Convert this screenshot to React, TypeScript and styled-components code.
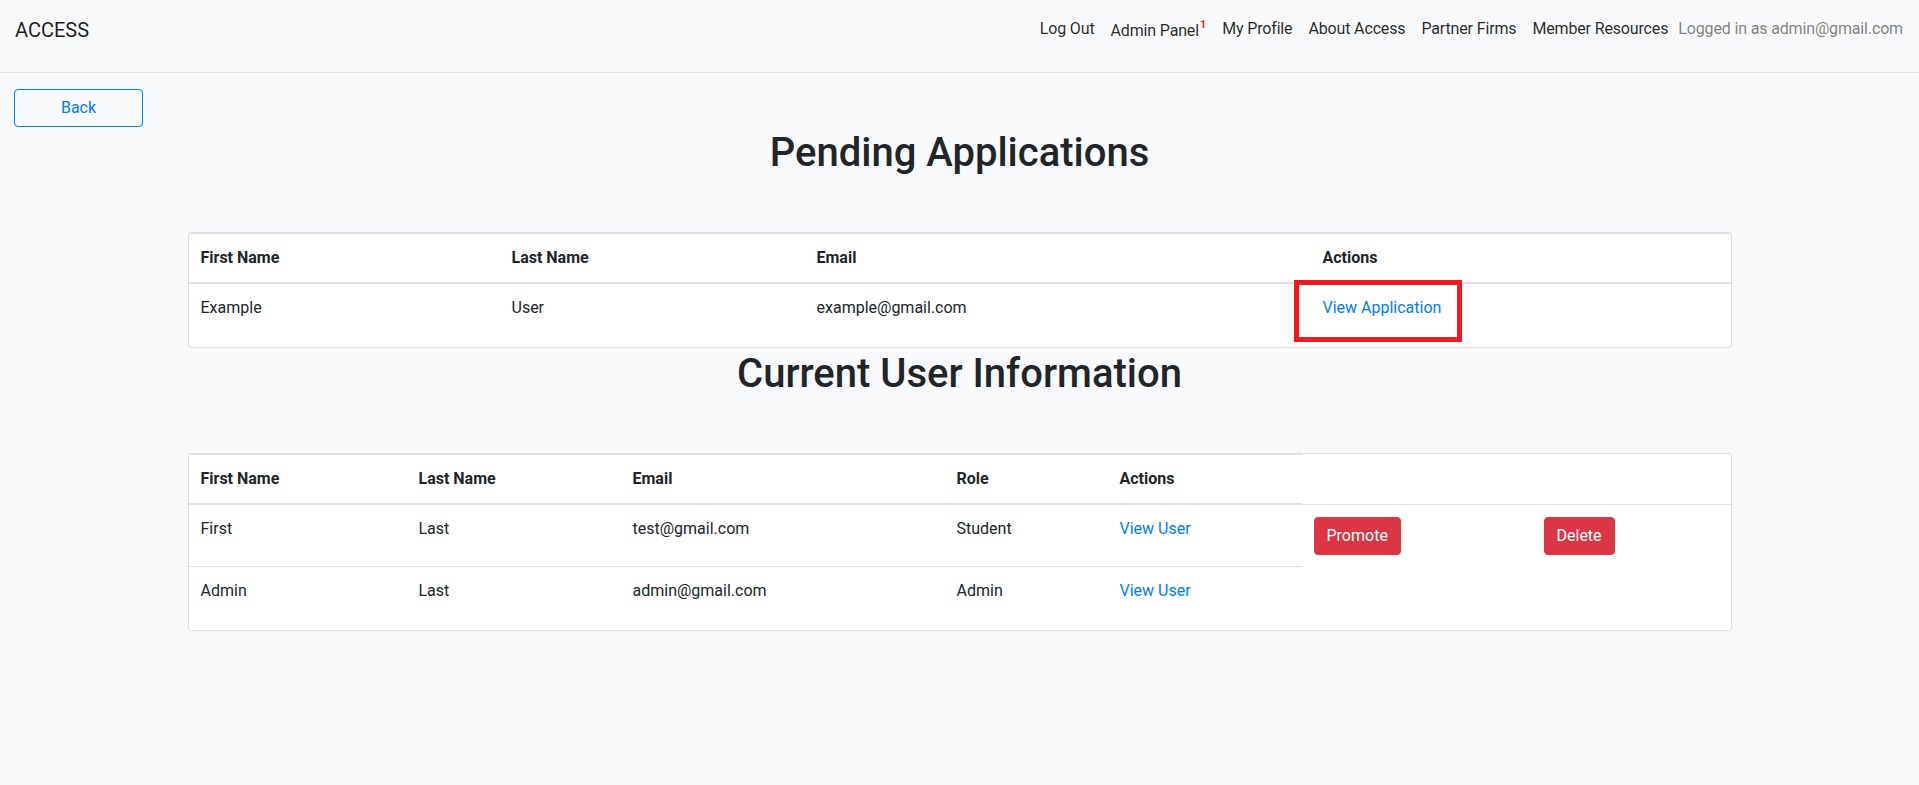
import React from "react";
import styled, { createGlobalStyle } from "styled-components";

const GlobalStyle = createGlobalStyle`
  html, body {
    margin: 0;
    padding: 0;
    background: #f8f9fa;
    color: #212529;
    font-family: Roboto, "Liberation Sans", sans-serif;
    font-size: 16px;
    line-height: 1.5;
  }
  #root { min-height: 785px; }
  * { box-sizing: border-box; }
`;

const Navbar = styled.nav`
  display: flex;
  align-items: center;
  justify-content: space-between;
  height: 73px;
  padding: 0 16px 13px 15px;
  border-bottom: 1px solid #dee2e6;
  background: #f8f9fa;
`;

const Brand = styled.a`
  font-size: 20px;
  line-height: 30px;
  color: rgba(0, 0, 0, 0.9);
  text-decoration: none;
`;

const NavList = styled.div`
  display: flex;
  align-items: center;
  letter-spacing: -0.15px;
`;

const NavLink = styled.a`
  padding: 0 8px;
  line-height: 24px;
  color: rgba(0, 0, 0, 0.85);
  text-decoration: none;
  white-space: nowrap;
`;

const Count = styled.sup`
  font-size: 11px;
  font-weight: 700;
  color: #ff1a1a;
  position: relative;
  top: -2px;
  margin-left: 1px;
`;

const NavText = styled.span`
  margin-left: 2px;
  line-height: 24px;
  color: rgba(0, 0, 0, 0.5);
  white-space: nowrap;
`;

const Main = styled.main`
  display: flex;
  flex-direction: column;
  padding: 16px 0 0;
`;

const Toolbar = styled.div`
  display: flex;
  padding: 0 14px;
`;

const OutlineButton = styled.button`
  width: 129px;
  height: 38px;
  border: 1px solid #007bff;
  border-radius: 4px;
  background: transparent;
  color: #007bff;
  font: inherit;
  cursor: pointer;
`;

const Heading = styled.h1`
  margin: 2px 0 55px;
  font-size: 40px;
  font-weight: 500;
  line-height: 48px;
  text-align: center;
`;

const Card = styled.div`
  width: 1544px;
  margin: 0 auto;
  background: #fff;
  border: 1px solid rgba(0, 0, 0, 0.125);
  border-radius: 4px;
  overflow: hidden;
`;

const Table = styled.table`
  width: 100%;
  margin-bottom: 15px;
  border-collapse: collapse;
  table-layout: fixed;
`;

const Col = styled.col<{ $w?: number }>`
  width: ${(p) => (p.$w ? `${p.$w}px` : "auto")};
`;

const Th = styled.th`
  padding: 12px;
  text-align: left;
  vertical-align: bottom;
  font-weight: 700;
  border-top: 1px solid #dee2e6;
  border-bottom: 2px solid #dee2e6;
`;

const Td = styled.td`
  padding: 12px;
  vertical-align: top;
  border-top: 1px solid #dee2e6;
`;

const Link = styled.a`
  color: #007bff;
  text-decoration: none;
`;

const Highlight = styled.span`
  position: relative;
  display: inline-block;
  &::after {
    content: "";
    position: absolute;
    left: -29px;
    right: -21px;
    top: -16px;
    bottom: -22px;
    border: 5px solid #ed1c24;
    pointer-events: none;
  }
`;

const DangerButton = styled.button`
  height: 38px;
  padding: 6px 12px;
  border: 1px solid #dc3545;
  border-radius: 4px;
  background: #dc3545;
  color: #fff;
  font: inherit;
  line-height: 24px;
  cursor: pointer;
`;

const pending = [{ first: "Example", last: "User", email: "example@gmail.com" }];

const users = [
  { first: "First", last: "Last", email: "test@gmail.com", role: "Student", manage: true },
  { first: "Admin", last: "Last", email: "admin@gmail.com", role: "Admin", manage: false },
];

export default function App() {
  return (
    <>
      <GlobalStyle />
      <Navbar>
        <Brand href="#">ACCESS</Brand>
        <NavList>
          <NavLink href="#">Log Out</NavLink>
          <NavLink href="#">
            Admin Panel<Count>1</Count>
          </NavLink>
          <NavLink href="#">My Profile</NavLink>
          <NavLink href="#">About Access</NavLink>
          <NavLink href="#">Partner Firms</NavLink>
          <NavLink href="#">Member Resources</NavLink>
          <NavText>Logged in as admin@gmail.com</NavText>
        </NavList>
      </Navbar>
      <Main>
        <Toolbar>
          <OutlineButton>Back</OutlineButton>
        </Toolbar>

        <Heading>Pending Applications</Heading>
        <Card>
          <Table>
            <colgroup>
              <Col $w={311} />
              <Col $w={305} />
              <Col $w={506} />
              <Col />
            </colgroup>
            <thead>
              <tr>
                <Th>First Name</Th>
                <Th>Last Name</Th>
                <Th>Email</Th>
                <Th>Actions</Th>
              </tr>
            </thead>
            <tbody>
              {pending.map((p) => (
                <tr key={p.email}>
                  <Td>{p.first}</Td>
                  <Td>{p.last}</Td>
                  <Td>{p.email}</Td>
                  <Td>
                    <Highlight>
                      <Link href="#">View Application</Link>
                    </Highlight>
                  </Td>
                </tr>
              ))}
            </tbody>
          </Table>
        </Card>

        <Heading>Current User Information</Heading>
        <Card>
          <Table>
            <colgroup>
              <Col $w={218} />
              <Col $w={214} />
              <Col $w={324} />
              <Col $w={163} />
              <Col $w={194} />
              <Col $w={230} />
              <Col />
            </colgroup>
            <thead>
              <tr>
                <Th>First Name</Th>
                <Th>Last Name</Th>
                <Th>Email</Th>
                <Th>Role</Th>
                <Th>Actions</Th>
              </tr>
            </thead>
            <tbody>
              {users.map((u) => (
                <tr key={u.email}>
                  <Td>{u.first}</Td>
                  <Td>{u.last}</Td>
                  <Td>{u.email}</Td>
                  <Td>{u.role}</Td>
                  <Td>
                    <Link href="#">View User</Link>
                  </Td>
                  {u.manage && (
                    <>
                      <Td>
                        <DangerButton>Promote</DangerButton>
                      </Td>
                      <Td>
                        <DangerButton>Delete</DangerButton>
                      </Td>
                    </>
                  )}
                </tr>
              ))}
            </tbody>
          </Table>
        </Card>
      </Main>
    </>
  );
}
